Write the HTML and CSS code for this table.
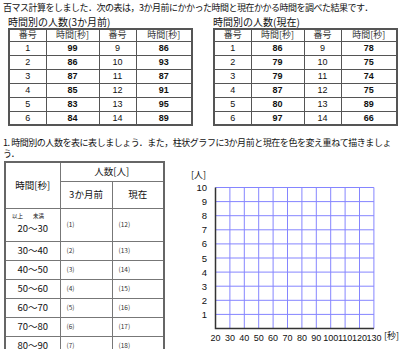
FILE: index.html
```html
<!DOCTYPE html>
<html lang="ja">
<head>
<meta charset="utf-8">
<link rel="stylesheet" href="styles.css">
</head>
<body>
<p class="intro">百マス計算をしました．次の表は，3か月前にかかった時間と現在かかる時間を調べた結果です．</p>
<div class="tables">
  <section class="block">
    <h2 class="title">時間別の人数(3か月前)</h2>
    <table class="data">
      <colgroup><col class="c1"><col class="c2"><col class="c3"><col class="c4"></colgroup>
      <tr><th>番号</th><th>時間[秒]</th><th>番号</th><th>時間[秒]</th></tr>
      <tr><td>1</td><td class="v">99</td><td>9</td><td class="v">86</td></tr>
      <tr><td>2</td><td class="v">86</td><td>10</td><td class="v">93</td></tr>
      <tr><td>3</td><td class="v">87</td><td>11</td><td class="v">87</td></tr>
      <tr><td>4</td><td class="v">85</td><td>12</td><td class="v">91</td></tr>
      <tr><td>5</td><td class="v">83</td><td>13</td><td class="v">95</td></tr>
      <tr><td>6</td><td class="v">84</td><td>14</td><td class="v">89</td></tr>
    </table>
  </section>
  <section class="block">
    <h2 class="title">時間別の人数(現在)</h2>
    <table class="data">
      <colgroup><col class="c1"><col class="c2"><col class="c3"><col class="c4"></colgroup>
      <tr><th>番号</th><th>時間[秒]</th><th>番号</th><th>時間[秒]</th></tr>
      <tr><td>1</td><td class="v">86</td><td>9</td><td class="v">78</td></tr>
      <tr><td>2</td><td class="v">79</td><td>10</td><td class="v">75</td></tr>
      <tr><td>3</td><td class="v">79</td><td>11</td><td class="v">74</td></tr>
      <tr><td>4</td><td class="v">87</td><td>12</td><td class="v">75</td></tr>
      <tr><td>5</td><td class="v">80</td><td>13</td><td class="v">89</td></tr>
      <tr><td>6</td><td class="v">97</td><td>14</td><td class="v">66</td></tr>
    </table>
  </section>
</div>
<p class="task">1. 時間別の人数を表に表しましょう．また，柱状グラフに3か月前と現在を色を変え重ねて描きましょう．</p>
<div class="lower">
  <table class="tally">
    <colgroup><col class="t1"><col class="t2"><col class="t3"></colgroup>
    <tr class="hr1"><th rowspan="2">時間[秒]</th><th colspan="2">人数[人]</th></tr>
    <tr class="hr2"><th>3か月前</th><th>現在</th></tr>
    <tr class="first"><td class="range"><span class="note"><span>以上</span><span>未満</span></span><span>20～30</span></td><td class="blank">(1)</td><td class="blank">(12)</td></tr>
    <tr><td class="range">30～40</td><td class="blank">(2)</td><td class="blank">(13)</td></tr>
    <tr><td class="range">40～50</td><td class="blank">(3)</td><td class="blank">(14)</td></tr>
    <tr><td class="range">50～60</td><td class="blank">(4)</td><td class="blank">(15)</td></tr>
    <tr><td class="range">60～70</td><td class="blank">(5)</td><td class="blank">(16)</td></tr>
    <tr><td class="range">70～80</td><td class="blank">(6)</td><td class="blank">(17)</td></tr>
    <tr><td class="range">80～90</td><td class="blank">(7)</td><td class="blank">(18)</td></tr>
  </table>
  <svg class="chart" width="220" height="189" viewBox="0 0 220 189">
    <path class="grid" d="M47.9 26.5V167.5M62.3 26.5V167.5M76.7 26.5V167.5M91.1 26.5V167.5M105.5 26.5V167.5M119.9 26.5V167.5M134.3 26.5V167.5M148.7 26.5V167.5M163.1 26.5V167.5M177.5 26.5V167.5M191.9 26.5V167.5M33.5 26.5H191.9M33.5 40.6H191.9M33.5 54.7H191.9M33.5 68.8H191.9M33.5 82.9H191.9M33.5 97H191.9M33.5 111.1H191.9M33.5 125.2H191.9M33.5 139.3H191.9M33.5 153.4H191.9"/>
    <path class="axis" d="M33.5 26.5V167.5H191.9"/>
    <text class="unit" x="9" y="13">[人]</text>
    <g class="ylab">
      <text x="25" y="26.5">10</text>
      <text x="25" y="40.6">9</text>
      <text x="25" y="54.7">8</text>
      <text x="25" y="68.8">7</text>
      <text x="25" y="82.9">6</text>
      <text x="25" y="97">5</text>
      <text x="25" y="111.1">4</text>
      <text x="25" y="125.2">3</text>
      <text x="25" y="139.3">2</text>
      <text x="25" y="153.4">1</text>
    </g>
    <g class="xlab">
      <text x="33.5" y="177">20</text>
      <text x="47.9" y="177">30</text>
      <text x="62.3" y="177">40</text>
      <text x="76.7" y="177">50</text>
      <text x="91.1" y="177">60</text>
      <text x="105.5" y="177">70</text>
      <text x="119.9" y="177">80</text>
      <text x="134.3" y="177">90</text>
      <text x="148.7" y="177">100</text>
      <text x="163.1" y="177">110</text>
      <text x="177.5" y="177">120</text>
      <text x="191.9" y="177">130</text>
    </g>
    <text class="unit" x="202" y="174">[秒]</text>
  </svg>
</div>
</body>
</html>
```

FILE: styles.css
```css
* { box-sizing: border-box; }
html, body { overflow: hidden; }
body {
  margin: 0;
  width: 400px;
  height: 349px;
  font-family: "Noto Sans CJK JP", sans-serif;
  color: #111;
  background: #fff;
}
.intro {
  margin: 0;
  padding: 2px 0 0 3px;
  font-size: 9px;
  line-height: 12px;
  letter-spacing: -0.5px;
  white-space: nowrap;
}
.tables {
  display: flex;
  gap: 20px;
  padding-left: 8px;
  margin-top: 2px;
}
.title {
  margin: 0;
  font-size: 10px;
  font-weight: normal;
  line-height: 12px;
}
.data {
  border-collapse: collapse;
  table-layout: fixed;
  width: 183px;
  font-size: 9px;
  border: 2px solid #555;
}
.data .c1 { width: 37px; }
.data .c2 { width: 53px; }
.data .c3 { width: 37px; }
.data .c4 { width: 56px; }
.data th, .data td {
  border: 1px solid #555;
  text-align: center;
  padding: 0;
  line-height: 10px;
}
.data th { height: 12px; font-weight: normal; color: #333; }
.data td { height: 14px; font-family: "Liberation Sans", Arial, sans-serif; }
.data td.v { font-weight: bold; }
.task {
  margin: 11px 0 0;
  padding-left: 3px;
  font-size: 9px;
  line-height: 11px;
  letter-spacing: -0.45px;
}
.lower {
  display: flex;
  align-items: flex-start;
  gap: 17px;
  padding-left: 4px;
  margin-top: 2px;
}
.tally {
  border-collapse: collapse;
  table-layout: fixed;
  width: 159px;
  border: 2px solid #666;
  font-size: 9.5px;
  flex: none;
}
.tally .t1 { width: 55px; }
.tally .t2 { width: 52px; }
.tally .t3 { width: 52px; }
.tally th, .tally td {
  border: 1px solid #777;
  padding: 0;
  font-weight: normal;
  line-height: 11px;
}
.tally .hr1 { height: 19px; }
.tally .hr2 { height: 27px; }
.tally tr { height: 19px; }
.tally tr.first { height: 33px; }
.tally .range { text-align: center; }
.tally .first .range { vertical-align: top; padding-top: 4px; }
.tally .note {
  display: flex;
  justify-content: space-between;
  width: 32px;
  margin: 0 0 4px 6px;
  font-size: 5.5px;
  line-height: 6px;
}
.tally .blank {
  font-size: 6.5px;
  padding-left: 6px;
  color: #333;
}
.chart { flex: none; display: block; }
.chart .grid { stroke: #8585ff; stroke-width: 1; fill: none; }
.chart .axis { stroke: #333; stroke-width: 1.5; fill: none; }
.chart text { font-family: "Liberation Sans", Arial, sans-serif; font-size: 9.5px; fill: #111; dominant-baseline: central; }
.chart .ylab text { text-anchor: end; }
.chart .xlab text { text-anchor: middle; font-size: 9px; }
.chart .unit { font-family: "Noto Sans CJK JP", sans-serif; font-size: 9px; }
```
